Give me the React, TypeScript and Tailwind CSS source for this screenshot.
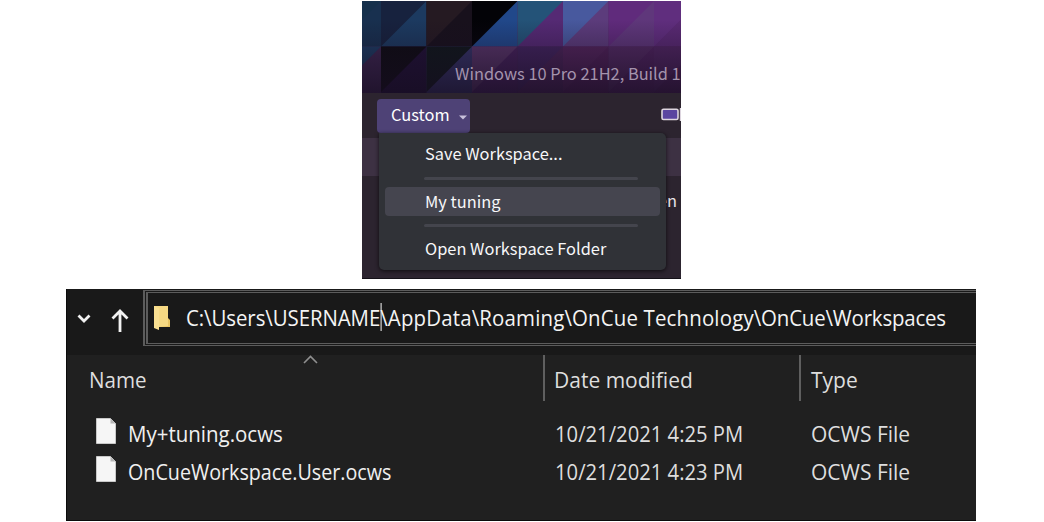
const mosaic: { x: number; y: number; a: string; b: string }[] = [
  { x: -26.5, y: 0, a: '#15304c', b: '#18304f' },
  { x: 19, y: 0, a: '#17223e', b: '#1c3a60' },
  { x: 64.5, y: 0, a: '#251a22', b: '#18111c' },
  { x: 110, y: 0, a: '#030307', b: '#21488a' },
  { x: 155.5, y: 0, a: '#245378', b: '#552a74' },
  { x: 201, y: 0, a: '#48599e', b: '#5c3c7c' },
  { x: 246.5, y: 0, a: '#602b7c', b: '#5f377b' },
  { x: 292, y: 0, a: '#602e7e', b: '#5a2a74' },
  { x: -26.5, y: 45.5, a: '#1d3c63', b: '#3d2650' },
  { x: 19, y: 45.5, a: '#0e0c12', b: '#201136' },
  { x: 64.5, y: 45.5, a: '#10181b', b: '#353468' },
  { x: 110, y: 45.5, a: '#583568', b: '#46225c' },
  { x: 155.5, y: 45.5, a: '#42245e', b: '#4a2458' },
  { x: 201, y: 45.5, a: '#53255c', b: '#4f2158' },
  { x: 246.5, y: 45.5, a: '#522a62', b: '#4e235e' },
  { x: 292, y: 45.5, a: '#502662', b: '#4b215a' },
];

function Mosaic() {
  return (
    <svg className="block h-[92px] w-[319px]" viewBox="0 0 319 92" preserveAspectRatio="none">
      <defs>
        <linearGradient id="shade" x1="0" y1="0" x2="0" y2="1">
          <stop offset="0.2" stopColor="#160d20" stopOpacity="0" />
          <stop offset="1" stopColor="#160d20" stopOpacity="0.72" />
        </linearGradient>
      </defs>
      {mosaic.map((t) => (
        <g key={`${t.x}-${t.y}`}>
          <rect x={t.x} y={t.y} width="45.7" height="46.7" fill={t.b} />
          <polygon points={`${t.x},${t.y} ${t.x + 45.5},${t.y} ${t.x},${t.y + 45.5}`} fill={t.a} />
        </g>
      ))}
      <rect width="319" height="92" fill="url(#shade)" />
    </svg>
  );
}

function MenuRule() {
  return <div className="ml-[45px] h-[3px] w-[214px] rounded-sm bg-[#44454d]" />;
}

function WorkspaceMenu() {
  return (
    <div className="absolute top-[132px] left-[17px] flex h-[137px] w-[287px] flex-col rounded-[5px] rounded-tl-none bg-[#303237] text-[16.4px] text-[#f7f7f9] shadow-[0_1px_4px_rgba(0,0,0,0.7)]">
      <div className="flex h-[45px] items-center pb-[4px] pl-[46px] whitespace-nowrap">Save Workspace...</div>
      <MenuRule />
      <div className="mx-[6px] mt-[7px] mb-[8px] flex h-[30px] items-center rounded-[4px] bg-[#45454f] pb-px pl-[40px]">
        My tuning
      </div>
      <MenuRule />
      <div className="flex h-[44px] items-center pl-[46px] whitespace-nowrap">Open Workspace Folder</div>
    </div>
  );
}

function AppPanel() {
  return (
    <section className="relative mt-px h-[278px] w-[319px] overflow-hidden border-b border-[#141118] bg-[#2c242f] font-['Noto_Sans_CJK_SC',sans-serif]">
      <Mosaic />
      <div className="absolute top-[59px] left-[93px] text-[16.4px] leading-[26px] whitespace-nowrap text-[#a493ad]">
        Windows 10 Pro 21H2, Build 1
      </div>
      <div className="flex h-[45px] justify-between pt-[6px]">
        <button className="ml-[15px] flex h-[34px] w-[93px] items-center rounded-[4px] bg-[#4e4276] pb-[4px] pl-[14px] text-[16.4px] text-white">
          Custom
          <svg className="mt-[7px] ml-[9px] h-[5px] w-[8px] shrink-0" viewBox="0 0 8 5">
            <path d="M0 .5h8L4 4.5z" fill="#c9c2dc" />
          </svg>
        </button>
        <svg className="mt-[9px] h-[13px] w-[20px]" viewBox="0 0 20 13">
          <rect x="1" y="1.2" width="16" height="10.3" rx="1.5" fill="#5a45a0" stroke="#ddd5df" strokeWidth="1.6" />
          <rect x="18.8" y="0" width="3" height="13" fill="#ddd5df" />
        </svg>
      </div>
      <div className="h-[38px] bg-[#3d3143]" />
      <div className="flex justify-end pt-[11px] pr-[4px] text-[16.4px] leading-[26px] text-[#e8e4ea]">en</div>
      <WorkspaceMenu />
    </section>
  );
}

function Folder() {
  return (
    <svg className="mt-px h-[26px] w-[18px] shrink-0" viewBox="0 0 18 26">
      <path d="M1 1h14v12l2 2v7H1z" fill="#e8c463" />
      <path d="M1 1h14v20l-9 1z" fill="#f6d983" />
      <path d="M1 1l5 2v22l-5-2z" fill="#f9df91" />
    </svg>
  );
}

function PageIcon() {
  return (
    <svg className="-mt-[6px] h-[26px] w-[20px]" viewBox="0 0 20 26">
      <path d="M.5.5h14l5 5v20H.5z" fill="#f6f6f6" stroke="#c9c9c9" />
      <path d="M14.5.5v5h5z" fill="#b5b5b5" />
    </svg>
  );
}

const files = [
  { name: 'My+tuning.ocws', date: '10/21/2021 4:25 PM', fit: 'scale-x-[0.975]' },
  { name: 'OnCueWorkspace.User.ocws', date: '10/21/2021 4:23 PM', fit: 'scale-x-[0.938]' },
];

const label = 'inline-block origin-left whitespace-nowrap';

function Explorer() {
  return (
    <section className="mt-[10px] h-[232px] w-[910px] overflow-hidden border-b border-l border-[#0b0b0b] bg-[#202020] font-['Open_Sans',sans-serif] text-[21px] leading-[30px] text-[#dedede]">
      <div className="flex h-[66px] bg-[#191919]">
        <svg className="mt-[22px] ml-[10px] h-[16px] w-[14px] shrink-0" viewBox="0 0 14 16">
          <path d="M1.5 4.5l5.5 5.5 5.5-5.5" fill="none" stroke="#f2f2f2" strokeWidth="2.8" />
        </svg>
        <svg className="mt-[20px] ml-[20px] h-[24px] w-[18px] shrink-0" viewBox="0 0 18 24">
          <path d="M9 23V2M1.5 9.5L9 2l7.5 7.5" fill="none" stroke="#f2f2f2" strokeWidth="2.8" />
        </svg>
        <div className="mt-px ml-[14px] flex h-[56px] w-[840px] shrink-0 border-y-[3px] border-l-[5px] border-double border-[#5c5c5c] pt-[11px] pl-[5px]">
          <Folder />
          <div className="-mt-px ml-[15px] flex origin-left scale-x-[0.973] text-[#f4f4f4]">
            <span className="tracking-[-0.08px] whitespace-nowrap">C:\Users\USERNAME</span>
            <span className="-mr-px h-[28px] w-px shrink-0 bg-white" />
            <span className="whitespace-nowrap">
              <span className="tracking-[0.16px]">\AppData\Roaming\OnCue Technology</span>
              <span className="tracking-[-0.18px]">\OnCue\Workspaces</span>
            </span>
          </div>
        </div>
      </div>
      <div className="grid h-[46px] grid-cols-[476px_256px_1fr]">
        <div className="relative pt-[10px] pl-[22px]">
          <span className={`${label} scale-x-[0.98]`}>Name</span>
          <svg className="absolute top-0 left-[236px] h-[9px] w-[15px]" viewBox="0 0 15 9">
            <path d="M1 8l6.5-6.5L14 8" fill="none" stroke="#8f8f8f" strokeWidth="1.6" />
          </svg>
        </div>
        <div className="border-l-2 border-[#5f5f5f] pt-[10px] pl-[9px]">
          <span className={label}>Date modified</span>
        </div>
        <div className="border-l-2 border-[#5f5f5f] pt-[10px] pl-[10px]">
          <span className={label}>Type</span>
        </div>
      </div>
      <div className="pt-[14px]">
        {files.map((f) => (
          <div key={f.name} className="grid h-[38px] grid-cols-[488px_256px_1fr] items-center">
            <div className="flex items-center pl-[29px]">
              <PageIcon />
              <span className={`${label} ml-[12px] ${f.fit} text-[#f0f0f0]`}>{f.name}</span>
            </div>
            <span className={`${label} scale-x-[0.963]`}>{f.date}</span>
            <span className={label}>OCWS File</span>
          </div>
        ))}
      </div>
    </section>
  );
}

export default function App() {
  return (
    <main className="flex h-[522px] w-[1044px] flex-col overflow-hidden bg-white">
      <div className="pl-[362px]">
        <AppPanel />
      </div>
      <div className="pl-[66px]">
        <Explorer />
      </div>
    </main>
  );
}
